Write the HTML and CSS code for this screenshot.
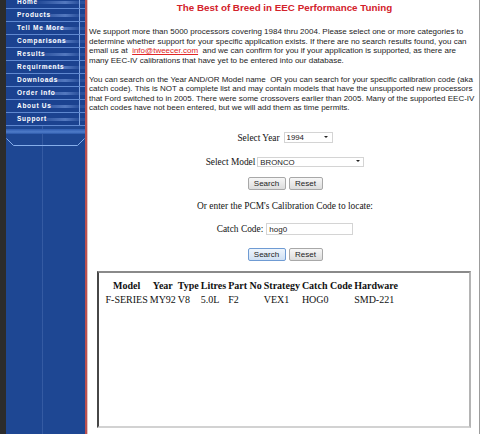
FILE: index.html
```html
<!DOCTYPE html>
<html>
<head>
<meta charset="utf-8">
<title>EEC Performance Tuning</title>
<link rel="stylesheet" href="styles.css">
</head>
<body>
<div class="page">
  <nav class="sidebar">
    <div class="strip"></div>
    <div class="panel">
      <ul class="menu">
        <li>Home</li>
        <li>Products</li>
        <li>Tell Me More</li>
        <li>Comparisons</li>
        <li>Results</li>
        <li>Requirments</li>
        <li>Downloads</li>
        <li>Order Info</li>
        <li>About Us</li>
        <li>Support</li>
      </ul>
      <div class="band"></div>
      <svg class="bracket" width="79" height="10" viewBox="0 0 79 10">
        <path d="M0.5 1.5 L7.5 8.5 L71.5 8.5 L78.5 1.5" fill="none" stroke="#86aeea" stroke-width="1"/>
      </svg>
    </div>
    <div class="edge"></div>
  </nav>
  <main class="content">
    <h1 class="title">The Best of Breed in EEC Performance Tuning</h1>
    <p class="intro">We support more than 5000 processors covering 1984 thru 2004. Please select one or more categories to determine whether support for your specific application exists. If there are no search results found, you can email us at &nbsp;<a class="mail" href="#">info@tweecer.com</a>&nbsp; and we can confirm for you if your application is supported, as there are<br>many EEC-IV calibrations that have yet to be entered into our database.</p>
    <p class="intro">You can search on the Year AND/OR Model name &nbsp;OR you can search for your specific calibration code (aka catch code). This is NOT a complete list and may contain models that have the unsupported new processors that Ford switched to in 2005. There were some crossovers earlier than 2005. Many of the supported EEC-IV catch codes have not been entered, but we will add them as time permits.</p>
    <form class="search">
      <div class="field row-year">
        <label>Select Year</label>
        <span class="select-wrap"><select class="sel sel-year"><option>1994</option></select></span>
      </div>
      <div class="field row-model">
        <label>Select Model</label>
        <span class="select-wrap model"><select class="sel sel-model"><option>BRONCO</option></select></span>
      </div>
      <div class="buttons row-btn1">
        <button type="button" class="btn btn-search">Search</button>
        <button type="button" class="btn btn-reset">Reset</button>
      </div>
      <div class="or-line">Or enter the PCM's Calibration Code to locate:</div>
      <div class="field row-catch">
        <label>Catch Code:</label>
        <input class="catch-input" type="text" value="hog0">
      </div>
      <div class="buttons row-btn2">
        <button type="button" class="btn btn-search default">Search</button>
        <button type="button" class="btn btn-reset">Reset</button>
      </div>
    </form>
    <div class="results">
      <table class="result-table">
        <tr>
          <th>Model</th><th>Year</th><th>Type</th><th>Litres</th><th>Part No</th><th>Strategy</th><th>Catch Code</th><th>Hardware</th>
        </tr>
        <tr>
          <td>F-SERIES</td><td>MY92</td><td>V8</td><td>5.0L</td><td>F2</td><td>VEX1</td><td>HOG0</td><td class="hw">SMD-221</td>
        </tr>
      </table>
    </div>
  </main>
</div>
</body>
</html>
```
FILE: styles.css
```css
* { box-sizing: border-box; }
html, body { margin: 0; padding: 0; background: #fff; }
body { font-family: "Liberation Sans", Arial, sans-serif; }

.page { display: flex; width: 480px; min-height: 434px; overflow: hidden; }

/* sidebar */
.sidebar { display: flex; flex: 0 0 88px; }
.strip { width: 6px; background: #2c2c2c; }
.panel {
  width: 79px;
  display: flex;
  flex-direction: column;
  background:
    linear-gradient(to right, transparent 36px, rgba(120,150,210,0.25) 36px, rgba(120,150,210,0.25) 37px, transparent 37px),
    #1e4793;
}
.edge { width: 3px; background: linear-gradient(to right, #b9504f 0, #b9504f 2px, #e6c3c3 2px); }

.menu { list-style: none; margin: -4px 0 0; padding: 0; }
.menu li {
  height: 13px;
  line-height: 12px;
  padding-left: 11px;
  color: #fff;
  font-family: "Liberation Sans", Arial, sans-serif;
  font-weight: bold;
  font-size: 6.5px;
  letter-spacing: 0.7px;
  white-space: nowrap;
  border-bottom: 1px solid #5f88d0;
  background:
    linear-gradient(to right, transparent 73px, #7fa3e0 73px, #7fa3e0 74px, transparent 74px),
    linear-gradient(to right, rgba(130,165,230,0) 35%, rgba(130,165,230,0.55) 75%, rgba(130,165,230,0.15) 92%) 0 5px / 100% 3px no-repeat,
    #1b4290;
}
.band {
  height: 5px;
  margin-top: 3px;
  background: linear-gradient(to bottom, #2f5cb0, #4f7cc9 60%, #2a56a8);
}
.bracket { display: block; margin-top: 3px; }

/* content */
.content {
  flex: 1;
  border-right: 1px solid #9c9c9c;
  padding: 2px 1px 0 1px;
  color: #1c1c1c;
}
.title {
  margin: 0;
  padding-left: 2px;
  text-align: center;
  color: #d3222b;
  font-size: 9.8px;
  line-height: 12px;
  font-weight: bold;
}
.intro { margin: 13px 0 0; font-size: 8px; line-height: 9.5px; }
.intro + .intro { margin-top: 9.5px; }
.mail { color: #e02424; text-decoration: underline; }

.search {
  display: flex;
  flex-direction: column;
  align-items: center;
  padding-left: 3px;
  font-family: "Liberation Serif", "Times New Roman", serif;
  font-size: 9.4px;
  color: #141414;
}
.field { display: flex; align-items: center; gap: 4px; height: 11px; }
.row-year { margin-top: 19.5px; }
.row-model { margin-top: 14px; height: 10px; gap: 2px; }
.row-btn1 { margin-top: 10px; }
.or-line { margin-top: 10.5px; line-height: 11px; }
.row-catch { margin-top: 11.5px; height: 12px; gap: 3px; }
.row-btn2 { margin-top: 13px; }

.select-wrap { position: relative; display: inline-block; }
.select-wrap::after {
  content: "";
  position: absolute;
  right: 5px;
  top: 4px;
  border-left: 2px solid transparent;
  border-right: 2px solid transparent;
  border-top: 2px solid #222;
}
.select-wrap.model::after { right: 4px; top: 3px; }
.sel {
  -webkit-appearance: none;
  appearance: none;
  display: block;
  margin: 0;
  border: 1px solid #d4d4d4;
  border-radius: 0;
  background: #fff;
  color: #222;
  font-family: "Liberation Sans", Arial, sans-serif;
  font-size: 7.8px;
  padding: 0 0 0 2px;
  line-height: 9px;
}
.sel-year { width: 49px; height: 11px; }
.sel-model { width: 107px; height: 10px; }

.buttons { display: flex; gap: 3px; }
.btn {
  height: 13px;
  margin: 0;
  padding: 0;
  border: 1px solid #a8a8a8;
  border-radius: 2px;
  background: linear-gradient(#f7f7f7, #dcdcdc);
  color: #222;
  font-family: "Liberation Sans", Arial, sans-serif;
  font-size: 8px;
  line-height: 11px;
}
.btn-search { width: 38px; }
.btn-reset { width: 34px; }
.btn.default { border-color: #6f9bd3; background: linear-gradient(#eef5fc, #cfe0f3); }

.catch-input {
  width: 87px;
  height: 12px;
  margin: 0;
  border: 1px solid #d4d4d4;
  padding: 0 2px;
  font-family: "Liberation Sans", Arial, sans-serif;
  font-size: 8px;
  color: #222;
}

/* results frame */
.results {
  margin: 10px 7px 0 8px;
  height: 157px;
  border-style: solid;
  border-width: 2px;
  border-color: #8a8a8a #b4b4b4 #d2d2d2 #474747;
  padding: 5px 4px 4px 5px;
}
.result-table {
  font-family: "Liberation Serif", "Times New Roman", serif;
  font-size: 10px;
  color: #111;
  border-spacing: 1px;
}
.result-table th, .result-table td { padding: 1px 0.5px; white-space: nowrap; }
.result-table td { text-align: left; }
```
